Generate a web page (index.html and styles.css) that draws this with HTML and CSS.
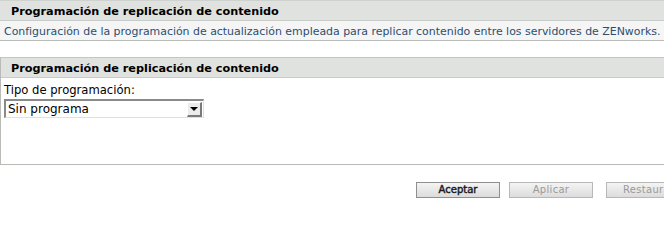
FILE: index.html
```html
<!DOCTYPE html>
<html lang="es">
<head>
<meta charset="utf-8">
<link rel="stylesheet" href="styles.css">
</head>
<body>
<div class="page">
  <div class="top-head">Programación de replicación de contenido</div>
  <div class="desc">Configuración de la programación de actualización empleada para replicar contenido entre los servidores de ZENworks.</div>
  <div class="section">
    <div class="sec-head">Programación de replicación de contenido</div>
    <div class="sec-body">
      <div class="label">Tipo de programación:</div>
      <div class="select">
        <span class="sel-text">Sin programa</span>
        <span class="sel-btn"><span class="tri"></span></span>
      </div>
    </div>
  </div>
  <div class="buttons">
    <button class="btn primary">Aceptar</button>
    <button class="btn disabled">Aplicar</button>
    <button class="btn disabled wide">Restaurar</button>
  </div>
</div>
</body>
</html>
```
FILE: styles.css
```css
html, body { margin: 0; padding: 0; background: #fff; }
body { font-family: "DejaVu Sans", Verdana, sans-serif; font-size: 12px; color: #000; width: 664px; height: 210px; overflow: hidden; }
.page { display: flex; flex-direction: column; }
.top-head {
  height: 20px; box-sizing: border-box; padding: 3px 0 0 11px;
  background: #dfe2df; font-weight: bold; font-size: 11.25px; line-height: 15px;
  border-top: 1px solid #cfd3cf;
}
.desc {
  height: 21px; box-sizing: border-box; padding: 3px 0 0 4px;
  background: #f4f5f4; color: #2b4f72; line-height: 15px; font-size: 10.93px;
  border-top: 1px solid #c8ccc8; border-bottom: 1px solid #b9bdb9;
  white-space: nowrap;
}
.section {
  margin-top: 16px; height: 108px; box-sizing: border-box;
  border-top: 1px solid #c3c7c3; border-left: 1px solid #b9bcb6; border-bottom: 1px solid #b9bcb6;
  display: flex; flex-direction: column;
}
.sec-head {
  height: 20px; box-sizing: border-box; padding: 3px 0 0 10px;
  background: #dfe2df; font-weight: bold; font-size: 11.25px; line-height: 15px;
  border-bottom: 1px solid #c8ccc8;
}
.sec-body { padding: 5px 0 0 3px; }
.label { line-height: 14px; height: 14px; font-size: 11.6px; }
.select {
  margin-top: 2px; width: 200px; height: 19px; box-sizing: border-box;
  border-top: 2px solid #8a8a8a; border-left: 2px solid #8a8a8a;
  border-right: 1px solid #e0e0e0; border-bottom: 1px solid #e0e0e0;
  display: flex; align-items: center; justify-content: space-between;
  background: #fff;
}
.sel-text { padding-left: 2px; line-height: 14px; }
.sel-btn {
  width: 15px; height: 15px; box-sizing: border-box; margin-right: 1px;
  background: #ececec; border-right: 2px solid #7a7a7a; border-bottom: 2px solid #7a7a7a;
  border-top: 1px solid #fff; border-left: 1px solid #fff;
  display: flex; align-items: center; justify-content: center;
}
.tri { width: 0; height: 0; border-left: 4px solid transparent; border-right: 4px solid transparent; border-top: 4px solid #000; }
.buttons { display: flex; padding: 17px 0 0 416px; gap: 9px; }
.btn {
  font-family: "DejaVu Sans", Verdana, sans-serif; font-size: 10px; font-weight: normal;
  width: 84px; height: 16px; padding: 0; box-sizing: border-box;
  background: linear-gradient(#f4f4f4, #dcdcdc); border: 1px solid #8f8f8f; color: #1a1a1a;
  line-height: 14px; flex: none; -webkit-text-stroke: 0.45px #1a1a1a;
}
.btn.disabled { color: #9a9a9a; -webkit-text-stroke: 0; border-color: #b8b8b8; letter-spacing: 0.3px; }
.btn.wide { margin-left: 4px; text-align: left; padding-left: 16px; }
```
